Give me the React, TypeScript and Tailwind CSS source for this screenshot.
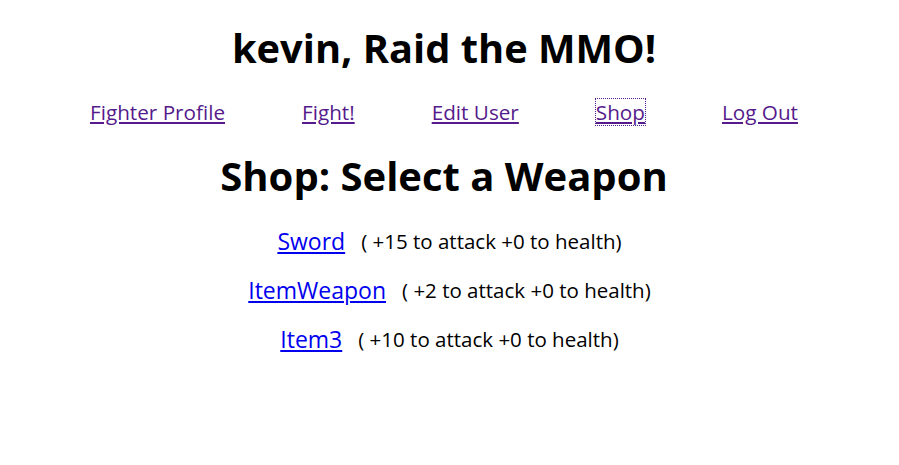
import React from "react";

export default function App() {
  const nav = ["Fighter Profile", "Fight!", "Edit User", "Shop", "Log Out"];
  const items = [
    { name: "Sword", desc: "( +15 to attack +0 to health)" },
    { name: "ItemWeapon", desc: "( +2 to attack +0 to health)" },
    { name: "Item3", desc: "( +10 to attack +0 to health)" },
  ];
  return (
    <div className="w-[899px] h-[465px] bg-white text-black flex flex-col items-center font-['Open_Sans',sans-serif]">
      <h1 className="mt-[24px] h-[48px] leading-[48px] text-[39.8px] font-bold pr-[11px]">kevin, Raid the MMO!</h1>
      <nav className="mt-[24px] h-[32px] flex items-center gap-[77px] pr-[11px] text-[20.7px] leading-[32px]">
        {nav.map((n) => (
          <a
            key={n}
            href="#"
            className={
              "text-[#551a8b] underline leading-[26px] " +
              (n === "Shop" ? "outline outline-1 outline-dotted outline-[#551a8b]" : "")
            }
          >
            {n}
          </a>
        ))}
      </nav>
      <h2 className="mt-[24px] h-[48px] leading-[48px] text-[40px] font-bold pr-[11px]">Shop: Select a Weapon</h2>
      <div className="mt-[25px] flex flex-col items-center gap-[17px]">
        {items.map((it) => (
          <div key={it.name} className="h-[32px] flex items-center gap-[16px] leading-[32px]">
            <a href="#" className="text-[#0000ee] underline text-[23px]">
              {it.name}
            </a>
            <span className="text-[20.5px]">{it.desc}</span>
          </div>
        ))}
      </div>
    </div>
  );
}
